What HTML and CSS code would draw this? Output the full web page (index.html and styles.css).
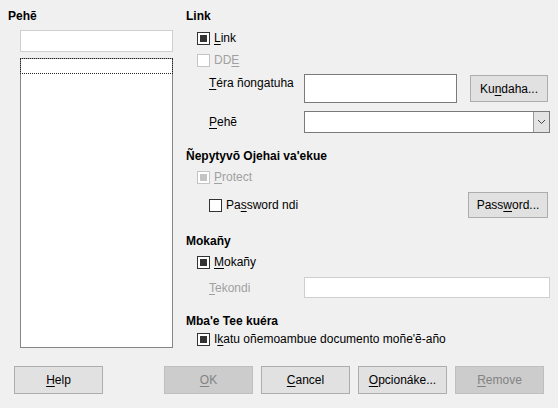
FILE: index.html
```html
<!DOCTYPE html>
<html>
<head>
<meta charset="utf-8">
<link rel="stylesheet" href="styles.css">
</head>
<body>
<div class="main">
  <div class="left">
    <div class="hdr">Pehẽ</div>
    <div class="name-input"></div>
    <div class="listbox"><div class="focus-row"></div></div>
  </div>
  <div class="right">
    <div class="hdr">Link</div>
    <div class="cb-row r-link"><span class="cb checked"></span><span><u>L</u>ink</span></div>
    <div class="cb-row r-dde disabled"><span class="cb"></span><span>DD<u>E</u></span></div>
    <div class="field r-file">
      <span class="flabel top"><u>T</u>éra ñongatuha</span>
      <span class="textbox tall"></span>
      <span class="btn browse">Ku<u>n</u>daha...</span>
    </div>
    <div class="field r-sect">
      <span class="flabel"><u>P</u>ehẽ</span>
      <span class="select"><span class="drop"><svg width="9" height="6" viewBox="0 0 9 6"><path d="M1 1 L4.5 4.5 L8 1" fill="none" stroke="#444" stroke-width="1"/></svg></span></span>
    </div>
    <div class="hdr h-mt">Ñepytyvõ Ojehai va'ekue</div>
    <div class="cb-row r-prot disabled"><span class="cb checked"></span><span><u>P</u>rotect</span></div>
    <div class="field r-pass">
      <span class="cb"></span><span class="pass-label">Pa<u>s</u>sword ndi</span>
      <span class="btn passbtn">Pass<u>w</u>ord...</span>
    </div>
    <div class="hdr h-mt">Mokañy</div>
    <div class="cb-row r-prot"><span class="cb checked"></span><span><u>M</u>okañy</span></div>
    <div class="field r-cond">
      <span class="flabel disabled-text"><u>T</u>ekondi</span>
      <span class="textbox light"></span>
    </div>
    <div class="hdr h-mt2">Mba'e Tee kuéra</div>
    <div class="cb-row r-edit"><span class="cb checked"></span><span>I<u>k</u>atu oñemoambue documento moñe'ẽ-año</span></div>
  </div>
</div>
<div class="buttons">
  <span class="btn"><u>H</u>elp</span>
  <div class="group">
    <span class="btn off"><u>O</u>K</span>
    <span class="btn"><u>C</u>ancel</span>
    <span class="btn"><u>O</u>pcionáke...</span>
    <span class="btn off"><u>R</u>emove</span>
  </div>
</div>
</body>
</html>
```
FILE: styles.css
```css
* { box-sizing: border-box; }
html, body { margin: 0; padding: 0; }
body {
  width: 558px;
  height: 408px;
  background: #f0f0f0;
  font-family: "Liberation Sans", Arial, sans-serif;
  font-size: 12px;
  color: #000;
  overflow: hidden;
}
u { text-decoration: underline; text-underline-offset: 2px; }

.main { display: flex; height: 366px; }

.left { width: 186px; padding: 6px 0 0 8px; display: flex; flex-direction: column; }
.hdr { height: 20px; line-height: 20px; font-weight: bold; }
.name-input {
  margin: 4px 0 0 12px; width: 153px; height: 22px;
  background: #fff; border: 1px solid #cfcfcf;
}
.listbox {
  margin: 6px 0 0 12px; width: 153px; height: 290px;
  background: #fff; border: 1px solid #868686; border-top-color: #a0a0a0;
}
.focus-row { height: 16px; border: 1px dotted #222; margin: -1px -1px 0 -1px; }

.right { flex: 1; padding-top: 6px; display: flex; flex-direction: column; }
.h-mt { margin-top: 13px; }
.h-mt2 { margin-top: 13px; }

.cb-row { height: 20px; display: flex; align-items: center; padding-left: 11px; gap: 4px; }
.r-link { margin-top: 2px; }
.r-dde { margin-top: 2px; }
.r-prot { margin-top: 1px; }
.r-edit { margin-top: -1px; height: 18px; }

.cb {
  width: 13px; height: 13px; flex: none;
  border: 1px solid #333; background: #fff;
  display: inline-flex; align-items: center; justify-content: center;
}
.cb.checked::after { content: ""; width: 7px; height: 7px; background: #333; }
.disabled { color: #a0a0a0; }
.disabled .cb { border-color: #c4c4c4; }
.disabled .cb.checked::after { background: #c4c4c4; }
.disabled-text { color: #a0a0a0; }

.field { display: flex; align-items: center; padding-left: 23px; }
.r-file { margin-top: 4px; height: 29px; align-items: flex-start; }
.r-sect { margin-top: 8px; height: 22px; }
.r-pass { margin-top: 5px; height: 26px; }
.r-cond { margin-top: 5px; height: 21px; }

.flabel { width: 95px; flex: none; }
.flabel.top { padding-top: 2px; }

.textbox { display: block; background: #fff; border: 1px solid #7a7a7a; }
.textbox.tall { width: 153px; height: 29px; }
.textbox.light { width: 246px; height: 21px; border-color: #cfcfcf; }

.btn {
  display: inline-flex; align-items: center; justify-content: center;
  width: 89px; height: 28px; flex: none;
  background: #e1e1e1; border: 1px solid #adadad; color: #000;
}
.btn.off { background: #cccccc; border-color: #bfbfbf; color: #838383; }
.browse { width: 78px; height: 27px; margin-left: 13px; margin-top: 1px; }

.select {
  display: flex; justify-content: flex-end;
  width: 246px; height: 22px; background: #fff; border: 1px solid #7a7a7a;
}
.drop {
  width: 16px; height: 20px; background: #e3e3e3; border-left: 1px solid #9a9a9a;
  display: flex; align-items: center; justify-content: center;
}

.r-pass .cb { margin-left: -0px; }
.pass-label { margin-left: 4px; }
.passbtn { width: 80px; height: 26px; margin-left: auto; margin-right: 10px; }

.buttons { display: flex; justify-content: space-between; padding: 0 14px; }
.group { display: flex; gap: 8px; }
```
